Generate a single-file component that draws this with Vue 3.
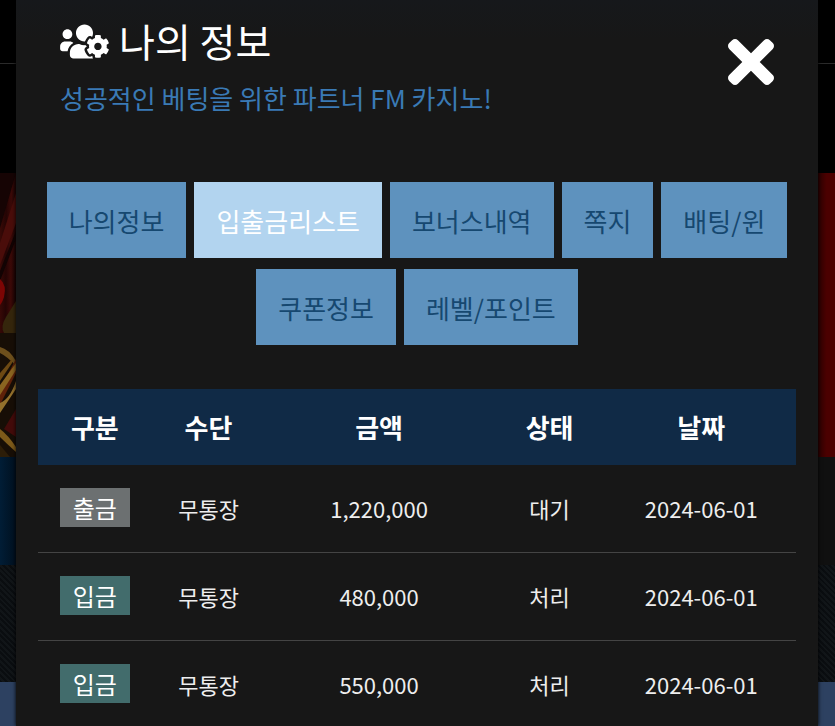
<script setup>
import { ref } from 'vue'

const tabs = ['나의정보', '입출금리스트', '보너스내역', '쪽지', '배팅/윈', '쿠폰정보', '레벨/포인트']
const active = ref('입출금리스트')

const columns = ['구분', '수단', '금액', '상태', '날짜']
const rows = [
  { id: 1, kind: '출금', method: '무통장', amount: '1,220,000', status: '대기', date: '2024-06-01' },
  { id: 2, kind: '입금', method: '무통장', amount: '480,000', status: '처리', date: '2024-06-01' },
  { id: 3, kind: '입금', method: '무통장', amount: '550,000', status: '처리', date: '2024-06-01' }
]
</script>

<template>
  <div class="screen">
    <div class="page" aria-hidden="true">
      <div class="page-top"></div>
      <div class="page-nav"></div>
      <div class="page-hero">
        <svg class="hero-art" viewBox="0 0 16 284" preserveAspectRatio="none">
          <defs>
            <linearGradient id="curtain" x1="0" y1="0" x2="1" y2="0.1">
              <stop offset="0" stop-color="#3a0a07" />
              <stop offset="0.4" stop-color="#240404" />
              <stop offset="0.7" stop-color="#3c0a08" />
              <stop offset="1" stop-color="#1c0303" />
            </linearGradient>
          </defs>
          <rect width="16" height="284" fill="url(#curtain)" />
          <path d="M0 0H16L0 55Z" fill="#160404" />
          <path d="M16 20V50L0 92V70Z" fill="#4a0d0a" />
          <path d="M16 58V66L0 108V98Z" fill="#120303" />
          <path d="M0 106Q7 112 4 124Q2 130 0 132Z" fill="#7c0504" />
          <path d="M16 128V160H4Q0 154 6 144Z" fill="#35260c" />
          <path d="M0 160H16V284H0Z" fill="#170e06" />
          <path d="M0 174Q9 176 16 188V193Q8 184 0 180Z" fill="#6d4f1c" />
          <path d="M16 186V200L0 232V216Z" fill="#5e2109" />
          <path d="M16 190V197L0 222V212Z" fill="#8a6420" />
          <path d="M0 200L12 186V190L0 208Z" fill="#6d4913" />
          <path d="M16 208V216L0 240V230Q10 226 16 208Z" fill="#93702c" />
          <path d="M16 236V264L4 256Z" fill="#430b0a" />
          <path d="M0 256Q8 262 16 274V279Q6 270 0 264Z" fill="#7d5a1a" />
          <path d="M0 272L10 284H0Z" fill="#2c1d08" />
        </svg>
      </div>
      <div class="page-band"></div>
      <div class="page-pattern"></div>
      <div class="page-foot"></div>
    </div>

    <section class="modal" role="dialog" aria-labelledby="modal-title">
      <header class="head">
        <div class="head-text">
          <h1 id="modal-title" class="title">
            <svg class="title-icon" viewBox="0 0 640 512" aria-hidden="true">
              <path fill="currentColor" d="M610.5 341.3c2.6-14.1 2.6-28.5 0-42.6l25.8-14.9c3-1.7 4.3-5.2 3.3-8.5-6.7-21.6-18.2-41.2-33.2-57.4-2.3-2.5-6-3.1-9-1.4l-25.8 14.9c-10.9-9.3-23.4-16.5-36.9-21.3v-29.8c0-3.4-2.4-6.4-5.7-7.1-22.3-5-45-4.8-66.2 0-3.3.7-5.7 3.7-5.7 7.1v29.8c-13.5 4.8-26 12-36.9 21.3l-25.8-14.9c-2.9-1.7-6.7-1.1-9 1.4-15 16.2-26.5 35.8-33.2 57.4-1 3.3.4 6.8 3.3 8.5l25.8 14.9c-2.6 14.1-2.6 28.5 0 42.6l-25.8 14.9c-3 1.7-4.3 5.2-3.3 8.5 6.7 21.6 18.2 41.1 33.2 57.4 2.3 2.5 6 3.1 9 1.4l25.8-14.9c10.9 9.3 23.4 16.5 36.9 21.3v29.8c0 3.4 2.4 6.4 5.7 7.1 22.3 5 45 4.8 66.2 0 3.3-.7 5.7-3.7 5.7-7.1v-29.8c13.5-4.8 26-12 36.9-21.3l25.8 14.9c2.9 1.7 6.7 1.1 9-1.4 15-16.2 26.5-35.8 33.2-57.4 1-3.3-.4-6.8-3.3-8.5l-25.8-14.9zM496 368.5c-26.8 0-48.5-21.8-48.5-48.5s21.8-48.5 48.5-48.5 48.5 21.8 48.5 48.5-21.7 48.5-48.5 48.5zM96 224c35.3 0 64-28.7 64-64s-28.7-64-64-64-64 28.7-64 64 28.7 64 64 64zm224 32c1.9 0 3.7-.5 5.6-.6 8.3-21.7 20.5-42.1 36.3-59.2 7.4-8 17.9-12.6 28.9-12.6 6.9 0 13.7 1.8 19.6 5.3l7.9 4.6c.8-.5 1.6-.9 2.4-1.4 7-14.6 11.2-30.8 11.2-48 0-61.9-50.1-112-112-112S208 82.1 208 144c0 61.9 50.1 112 112 112zm105.2 194.5c-2.3-1.2-4.6-2.6-6.8-3.9-8.2 4.8-15.3 9.8-27.5 9.8-10.9 0-21.4-4.6-28.9-12.6-18.3-19.8-32.3-43.9-40.2-69.6-10.7-34.5 24.9-49.7 25.8-50.3-.1-2.6-.1-5.2 0-7.8l-7.9-4.6c-3.8-2.2-7-5-9.8-8.1-3.3.2-6.5.6-9.8.6-24.6 0-47.6-6-68.5-16h-8.3C179.6 288 128 339.6 128 403.2V432c0 26.5 21.5 48 48 48h255.4c-3.7-6-6.2-12.8-6.2-20.3v-9.2zM173.1 274.6C161.5 263.1 145.6 256 128 256H64c-35.3 0-64 28.7-64 64v32c0 17.7 14.3 32 32 32h65.9c6.3-47.4 34.9-87.3 75.2-109.4z" />
            </svg>
            <span>나의 정보</span>
          </h1>
          <p class="subtitle">성공적인 베팅을 위한 파트너 FM 카지노!</p>
        </div>
        <button class="close" type="button" aria-label="닫기">
          <svg class="close-icon" viewBox="0 80 352 352" aria-hidden="true">
            <path fill="currentColor" d="M242.72 256l100.07-100.07c12.28-12.28 12.28-32.19 0-44.48l-22.24-22.24c-12.28-12.28-32.19-12.28-44.48 0L176 189.28 75.93 89.21c-12.28-12.28-32.19-12.28-44.48 0L9.21 111.45c-12.28 12.28-12.28 32.19 0 44.48L109.28 256 9.21 356.07c-12.28 12.28-12.28 32.19 0 44.48l22.24 22.24c12.28 12.28 32.2 12.28 44.48 0L176 322.72l100.07 100.07c12.28 12.28 32.2 12.28 44.48 0l22.24-22.24c12.28-12.28 12.28-32.19 0-44.48L242.72 256z" />
          </svg>
        </button>
      </header>

      <nav class="tabs">
        <button
          v-for="tab in tabs"
          :key="tab"
          type="button"
          class="tab"
          :class="{ active: tab === active }"
          @click="active = tab"
        >{{ tab }}</button>
      </nav>

      <table class="list">
        <colgroup>
          <col class="w-kind" />
          <col class="w-method" />
          <col class="w-amount" />
          <col class="w-status" />
          <col class="w-date" />
        </colgroup>
        <thead>
          <tr>
            <th v-for="c in columns" :key="c" scope="col">{{ c }}</th>
          </tr>
        </thead>
        <tbody>
          <tr v-for="r in rows" :key="r.id">
            <td><span class="badge" :class="{ deposit: r.kind === '입금' }">{{ r.kind }}</span></td>
            <td>{{ r.method }}</td>
            <td>{{ r.amount }}</td>
            <td>{{ r.status }}</td>
            <td>{{ r.date }}</td>
          </tr>
        </tbody>
      </table>
    </section>
  </div>
</template>

<style>
body {
  margin: 0;
  background: #000;
}
</style>

<style scoped>
.screen {
  display: grid;
  grid-template: 100vh / 1fr;
  overflow: hidden;
  font-family: "Noto Sans CJK KR", "Noto Sans", sans-serif;
  color: #eee;
}

.page,
.modal {
  grid-area: 1 / 1;
}

.page {
  display: flex;
  flex-direction: column;
}

.page-top {
  height: 63px;
  border-bottom: 1px solid #2a2a2a;
}

.page-nav {
  height: 109px;
}

.page-hero {
  display: flex;
  height: 284px;
  background: linear-gradient(90deg, #2c0000 0 98%, #4b0000 99%);
}

.hero-art {
  width: 16px;
  height: 100%;
}

.page-band {
  height: 108px;
  background: linear-gradient(90deg, #011d36, #00101f 16px, #101010 50%);
}

.page-pattern {
  height: 117px;
  background: repeating-linear-gradient(45deg, #0a0d10 0 2px, #111518 2px 4px);
}

.page-foot {
  flex: 1;
  background: #2d4161;
}

.modal {
  box-sizing: border-box;
  margin: 0 17px 0 16px;
  padding: 0 22px;
  background: linear-gradient(#16181b, #171717 40px);
  box-shadow: 0 0 4px #000;
}

.head {
  display: flex;
  justify-content: space-between;
  align-items: flex-start;
  padding: 12px 22px 0;
}

.title {
  display: flex;
  align-items: center;
  gap: 10px;
  margin: 0;
  font-size: 39px;
  line-height: 56px;
  font-weight: 400;
  color: #fff;
}

.title-icon {
  width: 49px;
  height: 39px;
  margin-top: 2px;
}

.subtitle {
  margin: 10px 0 0;
  font-size: 26px;
  line-height: 40px;
  font-weight: 400;
  color: #3a7ab5;
}

.close {
  display: flex;
  margin-top: 27px;
  padding: 0;
  border: 0;
  background: none;
  color: #fff;
  cursor: pointer;
}

.close-icon {
  width: 46px;
  height: 46px;
}

.tabs {
  display: flex;
  flex-wrap: wrap;
  justify-content: center;
  gap: 11px 8px;
  margin-top: 64px;
}

.tab {
  height: 76px;
  padding: 0 22px;
  border: 0;
  background: #5e92be;
  color: #164870;
  font-family: inherit;
  font-size: 26px;
  font-weight: 400;
  cursor: pointer;
}

.tab.active {
  background: #b2d4ef;
  color: #fff;
}

.list {
  width: 100%;
  margin-top: 44px;
  border-collapse: collapse;
  table-layout: fixed;
  text-align: center;
}

.w-kind,
.w-method,
.w-status {
  width: 15%;
}

.w-amount {
  width: 30%;
}

.w-date {
  width: 25%;
}

th {
  height: 74px;
  padding: 0 0 2px;
  background: #102a46;
  color: #fff;
  font-size: 26px;
  font-weight: 700;
}

td {
  height: 85px;
  padding: 0 0 2px;
  border-bottom: 1px solid #444;
  font-size: 22px;
  font-weight: 400;
}

.badge {
  display: inline-block;
  padding: 0 13px;
  background: #6c7071;
  color: #fff;
  font-size: 24px;
  line-height: 39px;
}

.badge.deposit {
  background: #426c6c;
}
</style>
